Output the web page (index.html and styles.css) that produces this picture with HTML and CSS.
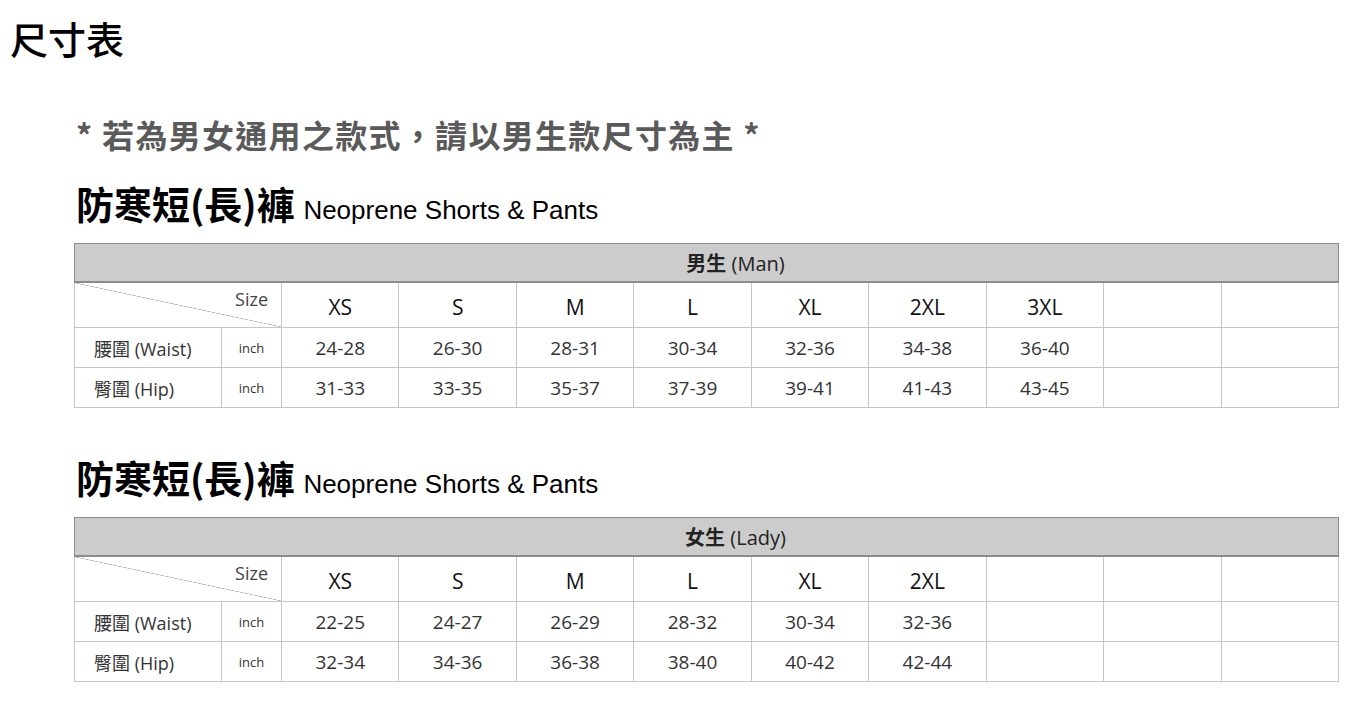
FILE: index.html
```html
<!DOCTYPE html>
<html lang="zh-Hant">
<head>
<meta charset="utf-8">
<title>尺寸表</title>
<link rel="stylesheet" href="styles.css">
</head>
<body>
<h1 class="title">尺寸表</h1>
<main class="content">
  <p class="notice">* 若為男女通用之款式，請以男生款尺寸為主 *</p>

  <section class="chart">
    <h2 class="chart-title"><span class="zh">防寒短(長)褲</span> <span class="en">Neoprene Shorts &amp; Pants</span></h2>
    <table class="size-table">
      <colgroup><col class="c-label"><col class="c-unit"><col span="9" class="c-size"></colgroup>
      <thead>
        <tr class="group-row"><th colspan="11" class="group"><b>男生</b> (Man)</th></tr>
      </thead>
      <tbody>
        <tr class="size-row"><td colspan="2" class="corner">Size</td><td>XS</td><td>S</td><td>M</td><td>L</td><td>XL</td><td>2XL</td><td>3XL</td><td></td><td></td></tr>
        <tr class="data-row"><td class="label">腰圍 (Waist)</td><td class="unit">inch</td><td>24-28</td><td>26-30</td><td>28-31</td><td>30-34</td><td>32-36</td><td>34-38</td><td>36-40</td><td></td><td></td></tr>
        <tr class="data-row"><td class="label">臀圍 (Hip)</td><td class="unit">inch</td><td>31-33</td><td>33-35</td><td>35-37</td><td>37-39</td><td>39-41</td><td>41-43</td><td>43-45</td><td></td><td></td></tr>
      </tbody>
    </table>
  </section>

  <section class="chart chart-second">
    <h2 class="chart-title"><span class="zh">防寒短(長)褲</span> <span class="en">Neoprene Shorts &amp; Pants</span></h2>
    <table class="size-table">
      <colgroup><col class="c-label"><col class="c-unit"><col span="9" class="c-size"></colgroup>
      <thead>
        <tr class="group-row"><th colspan="11" class="group"><b>女生</b> (Lady)</th></tr>
      </thead>
      <tbody>
        <tr class="size-row"><td colspan="2" class="corner">Size</td><td>XS</td><td>S</td><td>M</td><td>L</td><td>XL</td><td>2XL</td><td></td><td></td><td></td></tr>
        <tr class="data-row"><td class="label">腰圍 (Waist)</td><td class="unit">inch</td><td>22-25</td><td>24-27</td><td>26-29</td><td>28-32</td><td>30-34</td><td>32-36</td><td></td><td></td><td></td></tr>
        <tr class="data-row"><td class="label">臀圍 (Hip)</td><td class="unit">inch</td><td>32-34</td><td>34-36</td><td>36-38</td><td>38-40</td><td>40-42</td><td>42-44</td><td></td><td></td><td></td></tr>
      </tbody>
    </table>
  </section>
</main>
</body>
</html>
```

FILE: styles.css
```css
html, body {
  margin: 0;
  padding: 0;
  background: #ffffff;
}

body {
  font-family: "Open Sans", "Noto Sans CJK TC", sans-serif;
  color: #222222;
}

.title {
  margin: 19px 0 0 10px;
  font-family: "Noto Sans CJK TC", sans-serif;
  font-weight: 500;
  font-size: 38px;
  line-height: 38px;
  color: #000000;
}

.content {
  padding-left: 74px;
  width: 1265px;
}

.notice {
  margin: 61px 0 0 2px;
  font-family: "Noto Sans CJK TC", sans-serif;
  font-weight: 700;
  font-size: 32px;
  line-height: 32px;
  letter-spacing: 1.3px;
  color: #5a5a5a;
}

.chart-title {
  margin: 34px 0 0 2px;
  font-family: "Noto Sans CJK TC", sans-serif;
  font-weight: 700;
  font-size: 38px;
  line-height: 38px;
  color: #000000;
}

.chart-second .chart-title {
  margin-top: 50px;
}

.zh {
  font-family: "Noto Sans CJK TC", sans-serif;
}

.en {
  font-family: "Liberation Sans", Arial, sans-serif;
  font-weight: 400;
  font-size: 26px;
  line-height: 20px;
}

.size-table {
  margin: 21px 0 0 0;
  width: 1265px;
  border-collapse: collapse;
  table-layout: fixed;
  border: 1px solid #8c8c8c;
}

.c-label { width: 147px; }
.c-unit { width: 60px; }

.size-table td,
.size-table th {
  border: 1px solid #c6c6c6;
  padding: 0;
  text-align: center;
  color: #333333;
}

.group-row { height: 38px; }

.size-table th.group {
  background: #cccccc;
  border: 1px solid #8c8c8c;
  border-bottom: 2px solid #8c8c8c;
  padding-left: 58px;
  font-weight: 400;
  font-size: 20px;
  color: #222222;
}

.group b {
  font-family: "Noto Sans CJK TC", sans-serif;
  font-weight: 700;
  font-size: 20px;
}

.size-row { height: 46px; }

.size-row td {
  font-size: 21px;
  font-weight: 500;
  color: #111111;
  padding-top: 4px;
}

.size-row td.corner {
  text-align: right;
  vertical-align: top;
  padding: 4px 13px 0 0;
  font-size: 18px;
  font-weight: 400;
  color: #444444;
  background: linear-gradient(to top right, transparent calc(50% - 0.6px), #a8a8a8 50%, transparent calc(50% + 0.6px));
}

.data-row { height: 40px; }

.data-row td {
  font-size: 19px;
  color: #333333;
}

.data-row td.label {
  text-align: left;
  padding-left: 19px;
  font-size: 18px;
  color: #333333;
}

.data-row td.unit {
  font-size: 13px;
  color: #333333;
}
```
